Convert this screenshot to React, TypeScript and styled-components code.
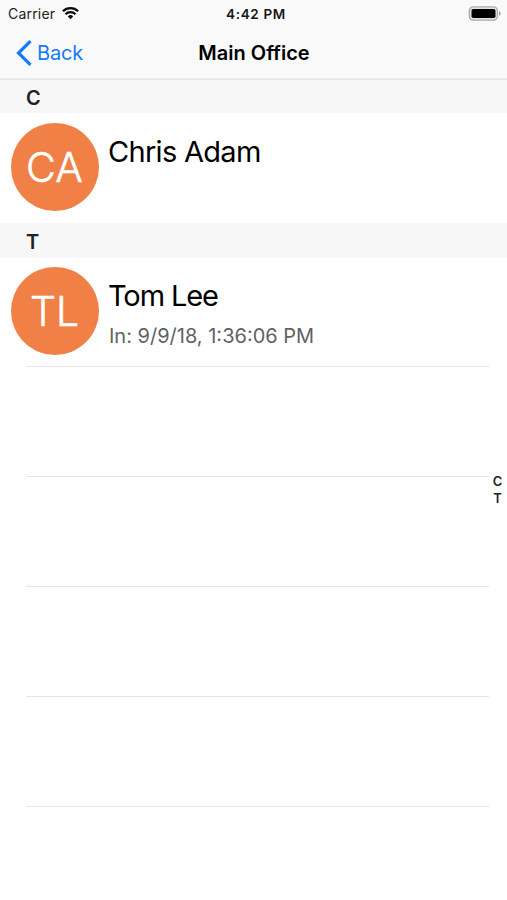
import React from "react";
import styled, { createGlobalStyle } from "styled-components";

const GlobalStyle = createGlobalStyle`
  * { box-sizing: border-box; }
  body { margin: 0; background: #fff; font-family: Inter, "Liberation Sans", sans-serif; color: #000; }
`;

const Screen = styled.div`
  position: relative;
  width: 507px;
  height: 900px;
  overflow: hidden;
  background: #fff;
`;

const TopBar = styled.header`
  height: 80px;
  background: #f9f9f9;
  border-bottom: 2px solid #e6e6e6;
`;

const StatusBar = styled.div`
  display: grid;
  grid-template-columns: 1fr auto 1fr;
  align-items: center;
  height: 27px;
  padding: 0 6px 0 8px;
  font-size: 14px;
  line-height: 27px;
`;

const Carrier = styled.div`
  display: flex;
  align-items: center;
  gap: 7px;
  color: #222;
  letter-spacing: 0.2px;
`;

const Clock = styled.div`
  padding: 1px 0 0 3px;
  font-size: 13.5px;
  font-weight: 600;
  line-height: 26px;
  letter-spacing: 0.65px;
  color: #161616;
`;

const BatterySlot = styled.div`
  display: flex;
  justify-content: flex-end;
`;

const NavBar = styled.nav`
  display: grid;
  grid-template-columns: 1fr auto 1fr;
  align-items: center;
  height: 51px;
  padding: 0 15px 0 16px;
`;

const BackButton = styled.button`
  display: flex;
  align-items: center;
  justify-self: start;
  gap: 5px;
  padding: 0;
  border: 0;
  background: none;
  color: #127bfb;
  font: 400 20px/28px Inter, sans-serif;
  letter-spacing: -0.2px;
`;

const Title = styled.h1`
  margin: 0;
  font-size: 20px;
  font-weight: 600;
  line-height: 28px;
  letter-spacing: 0;
`;

const SectionHeader = styled.h2<{ $height: number }>`
  height: ${(p) => p.$height}px;
  margin: 0;
  padding-left: 26px;
  background: #f7f7f7;
  color: #222;
  font-size: 20px;
  font-weight: 600;
  line-height: ${(p) => p.$height + 3}px;
`;

const Row = styled.div<{ $top: number }>`
  display: flex;
  height: 110px;
  padding: ${(p) => p.$top}px 0 0 11px;
  gap: 9px;
`;

const Avatar = styled.div`
  width: 88px;
  height: 88px;
  flex: none;
  border-radius: 50%;
  background: #f08045;
  color: #fff;
  font-size: 41px;
  font-weight: 300;
  line-height: 89px;
  text-align: center;
  text-indent: -1px;
  -webkit-text-stroke: 0.5px #fff;
`;

const Details = styled.div`
  padding-top: 11px;
`;

const Name = styled.div<{ $spacing: number }>`
  font-size: 29px;
  line-height: 36px;
  letter-spacing: ${(p) => p.$spacing}px;
`;

const Stamp = styled.div`
  margin-top: 9px;
  padding-left: 1px;
  color: #626262;
  font-size: 20px;
  line-height: 26px;
  letter-spacing: 0;
`;

const Separated = styled.div`
  height: 110px;
  margin: 0 18px 0 26px;
  border-bottom: 1px solid #e6e6e6;
`;

const FirstRule = styled(Separated)`
  height: 1px;
  margin-top: -2px;
`;

const IndexRail = styled.aside`
  position: absolute;
  top: 473px;
  right: 3px;
  width: 13px;
  color: #222;
  font-size: 13px;
  font-weight: 600;
  line-height: 17px;
  text-align: center;
`;

const WifiIcon = () => (
  <svg width="17" height="13" viewBox="0 0 17 13" fill="none" stroke="#0c0c0c">
    <path d="M0.9 4.3a10.8 10.8 0 0 1 15.2 0" strokeWidth="2.3" />
    <path d="M3.5 7.2a7 7 0 0 1 10 0" strokeWidth="2.2" />
    <path d="M8.5 12.2 5.8 9.4a3.8 3.8 0 0 1 5.4 0Z" fill="#0c0c0c" stroke="none" />
  </svg>
);

const BatteryIcon = () => (
  <svg width="33" height="15" viewBox="0 0 33 15">
    <rect x="1.3" y="0.9" width="28.1" height="13.2" rx="4" fill="#e4e4e4" stroke="#aaa" strokeWidth="1.3" />
    <rect x="3.5" y="2.9" width="24" height="9.2" rx="1.8" fill="#000" />
    <path d="M31 5.2q1.6.6 1.6 2.3T31 9.8Z" fill="#999" />
  </svg>
);

const BackChevron = () => (
  <svg width="16" height="26" viewBox="0 0 16 26" fill="none" stroke="#127bfb" strokeWidth="3.2">
    <path d="M14.5 1.2 2.5 13l12 11.8" />
  </svg>
);

export default function App() {
  return (
    <Screen>
      <GlobalStyle />
      <TopBar>
        <StatusBar>
          <Carrier>Carrier <WifiIcon /></Carrier>
          <Clock>4:42 PM</Clock>
          <BatterySlot><BatteryIcon /></BatterySlot>
        </StatusBar>
        <NavBar>
          <BackButton><BackChevron />Back</BackButton>
          <Title>Main Office</Title>
        </NavBar>
      </TopBar>
      <main>
        <SectionHeader $height={33}>C</SectionHeader>
        <Row $top={10}>
          <Avatar>CA</Avatar>
          <Details><Name $spacing={-0.7}>Chris Adam</Name></Details>
        </Row>
        <SectionHeader $height={35}>T</SectionHeader>
        <Row $top={9}>
          <Avatar>TL</Avatar>
          <Details>
            <Name $spacing={-1.1}>Tom Lee</Name>
            <Stamp>In: 9/9/18, 1:36:06 PM</Stamp>
          </Details>
        </Row>
        <FirstRule />
        <Separated />
        <Separated />
        <Separated />
        <Separated />
      </main>
      <IndexRail>
        <div>C</div>
        <div>T</div>
      </IndexRail>
    </Screen>
  );
}
